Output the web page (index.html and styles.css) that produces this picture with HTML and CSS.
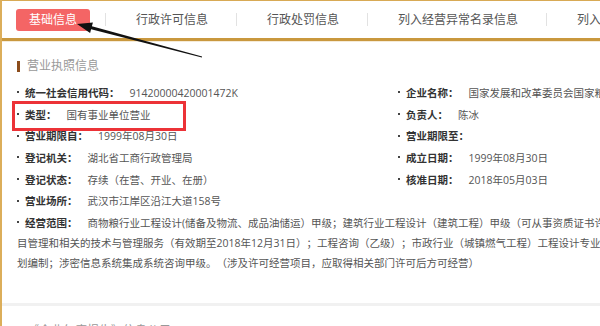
FILE: index.html
```html
<!DOCTYPE html>
<html lang="zh-CN">
  <head>
    <meta charset="UTF-8" />
    <meta name="viewport" content="width=device-width, initial-scale=1.0" />
    <title>基础信息</title>
    <link rel="stylesheet" href="styles.css">
  </head>
  <body>
    <div class="page">
      <div class="tabs">
        <a class="tab active">基础信息</a>
        <a class="tab">行政许可信息</a>
        <a class="tab">行政处罚信息</a>
        <a class="tab">列入经营异常名录信息</a>
        <a class="tab">列入严重违法失信企业名单信息</a>
      </div>

      <div class="section">
        <h3 class="title">营业执照信息</h3>
        <div class="info">
          <div class="item"><b>统一社会信用代码：</b>91420000420001472K</div>
          <div class="item"><b>企业名称：</b>国家发展和改革委员会国家粮食局武汉科学研究设计院</div>
          <div class="item"><b>类型：</b>国有事业单位营业</div>
          <div class="item"><b>负责人：</b>陈冰</div>
          <div class="item"><b>营业期限自：</b>1999年08月30日</div>
          <div class="item"><b>营业期限至：</b></div>
          <div class="item"><b>登记机关：</b>湖北省工商行政管理局</div>
          <div class="item"><b>成立日期：</b>1999年08月30日</div>
          <div class="item"><b>登记状态：</b>存续（在营、开业、在册）</div>
          <div class="item"><b>核准日期：</b>2018年05月03日</div>
          <div class="item"><b>营业场所：</b>武汉市江岸区沿江大道158号</div>
          <div class="item"></div>
          <div class="item scope"><b>经营范围：</b>商物粮行业工程设计(储备及物流、成品油储运）甲级；建筑行业工程设计（建筑工程）甲级（可从事资质证书许可范围内相应的建设工程总承包业务以及项<br>目管理和相关的技术与管理服务（有效期至2018年12月31日）；工程咨询（乙级）；市政行业（城镇燃气工程）工程设计专业乙级；城乡规<br>划编制；涉密信息系统集成系统咨询甲级。（涉及许可经营项目，应取得相关部门许可后方可经营）</div>
        </div>
      </div>

      <div class="section next">
        <h3 class="title">《企业年度报告》信息公示</h3>
      </div>

      <div class="mark-box"></div>
      <svg class="arrow" width="300" height="80" viewBox="0 0 300 80">
        <polygon points="77,24 92.9,22.4 91.9,26.2 202.1,56.5 201.9,57.5 91.1,29.2 90.1,33 " fill="#111" />
      </svg>
    </div>
  </body>
</html>
```

FILE: styles.css
```css
body {
  margin: 0;
  background: #fff;
  overflow: hidden;
  font-family: "Open Sans", "Noto Sans CJK SC", sans-serif;
  text-spacing-trim: space-all;
}
.page {
  position: relative;
  width: 1000px;
  min-height: 326px;
  border-left: 2px solid #dcae5a;
}
.tabs {
  display: flex;
  align-items: center;
  height: 37px;
  padding-left: 14px;
  border-top: 1px solid #d8aa55;
  border-bottom: 3px solid #c9983e;
  box-shadow: 0 1px 0 #f5ebd8;
  font-size: 12px;
  color: #555;
  white-space: nowrap;
}
.tab {
  padding: 0 28px 0 30px;
  line-height: 13px;
  border-left: 1px solid #e2e2e2;
  cursor: pointer;
}
.tab.active {
  height: 22px;
  line-height: 22px;
  padding: 0 13px;
  margin-right: 15px;
  border: none;
  border-radius: 3px;
  background: #f46565;
  color: #fff;
}
.section {
  padding: 15px 0 30px 15px;
}
.title {
  display: flex;
  align-items: center;
  margin: 0 0 7px;
  font-size: 12px;
  font-weight: normal;
  line-height: 20px;
  color: #999;
}
.title::before {
  content: "";
  width: 3px;
  height: 11px;
  margin-right: 7px;
  background: #8c4d1c;
}
.info {
  display: grid;
  grid-template-columns: 381px 1fr;
  row-gap: 1.7px;
  font-size: 10.5px;
  line-height: 20px;
  color: #555;
}
.item {
  white-space: nowrap;
}
.item:empty {
  height: 20px;
}
.item::before {
  content: "";
  display: inline-block;
  width: 2px;
  height: 2px;
  margin: 0 6px 4px 0;
  vertical-align: middle;
  background: #444;
}
.item:empty::before {
  display: none;
}
.item b {
  margin-right: 10px;
  color: #333;
}
.scope {
  grid-column: 1 / -1;
}
.next {
  padding-top: 15px;
  border-top: 3px solid #f1f1f1;
}
.mark-box {
  position: absolute;
  left: 10px;
  top: 101px;
  width: 168px;
  height: 24px;
  border: 3px solid #ec3237;
}
.arrow {
  position: absolute;
  left: -2px;
  top: 0;
}
```
